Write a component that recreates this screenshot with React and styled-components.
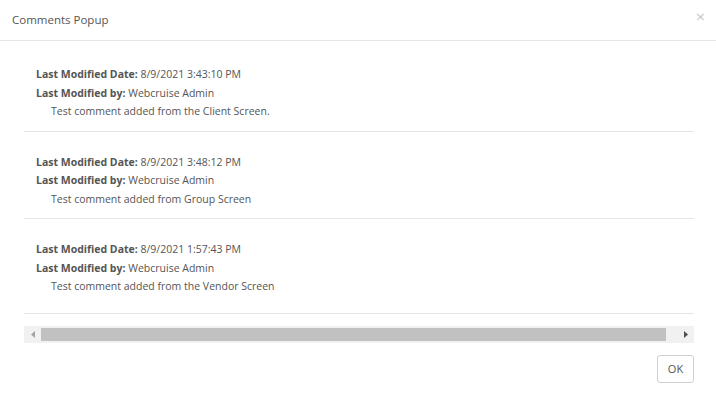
import React from "react";
import styled, { createGlobalStyle } from "styled-components";

const Global = createGlobalStyle`
  html, body { margin: 0; padding: 0; background: #fff; }
  body { font-family: "Open Sans", "Liberation Sans", sans-serif; color: #555; }
  * { box-sizing: border-box; }
`;

const Modal = styled.div`
  width: 716px;
  height: 405px;
  background: #fff;
  display: flex;
  flex-direction: column;
`;

const Header = styled.div`
  height: 41px;
  border-bottom: 1px solid #e5e5e5;
  display: flex;
  align-items: center;
  justify-content: space-between;
  padding: 0 10px 1px 12px;
`;

const Title = styled.h4`
  margin: 0;
  font-size: 11.5px;
  font-weight: 400;
  color: #555;
`;

const Close = styled.button`
  border: 0;
  background: none;
  padding: 0;
  margin-top: -6px;
  font-size: 13px;
  line-height: 1;
  color: #c8c8c8;
  font-family: "DejaVu Sans", sans-serif;
  cursor: pointer;
`;

const Body = styled.div`
  padding: 3px 22px 0 24px;
  display: flex;
  flex-direction: column;
`;

const List = styled.div`
  display: flex;
  flex-direction: column;
`;

const Item = styled.div`
  padding: 21px 12px ${(p) => (p.$last ? "17px" : "10px")};
  border-bottom: 1px solid #e5e5e5;
  font-size: 10.5px;
  line-height: 18.5px;
`;

const Line = styled.div`
  white-space: nowrap;
`;

const Label = styled.strong`
  font-weight: 700;
  color: #555;
`;

const Comment = styled.div`
  padding-left: 15px;
  white-space: nowrap;
`;

const Scrollbar = styled.div`
  margin-top: 12px;
  height: 17px;
  background: #f1f1f1;
  display: flex;
  align-items: center;
`;

const Arrow = styled.div`
  width: 17px;
  height: 17px;
  display: flex;
  align-items: center;
  justify-content: center;
  flex: none;
`;

const Thumb = styled.div`
  height: 13px;
  background: #c1c1c1;
  flex: none;
  width: 625px;
`;

const Spacer = styled.div`
  flex: 1;
`;

const Footer = styled.div`
  display: flex;
  justify-content: flex-end;
  padding: 12px 22px 0 24px;
`;

const OkButton = styled.button`
  width: 37px;
  height: 28px;
  border: 1px solid #d0d0d0;
  border-radius: 3px;
  background: #fff;
  color: #555;
  font-family: "Open Sans", "Liberation Sans", sans-serif;
  font-size: 11px;
  padding: 0;
`;

const comments = [
  { date: "8/9/2021 3:43:10 PM", by: "Webcruise Admin", text: "Test comment added from the Client Screen." },
  { date: "8/9/2021 3:48:12 PM", by: "Webcruise Admin", text: "Test comment added from Group Screen" },
  { date: "8/9/2021 1:57:43 PM", by: "Webcruise Admin", text: "Test comment added from the Vendor Screen" },
];

export default function App() {
  return (
    <>
      <Global />
      <Modal>
        <Header>
          <Title>Comments Popup</Title>
          <Close aria-label="close">×</Close>
        </Header>
        <Body>
          <List>
            {comments.map((c, i) => (
              <Item key={i} $last={i === comments.length - 1}>
                <Line>
                  <Label>Last Modified Date:</Label> {c.date}
                </Line>
                <Line>
                  <Label>Last Modified by:</Label> {c.by}
                </Line>
                <Comment>{c.text}</Comment>
              </Item>
            ))}
          </List>
          <Scrollbar>
            <Arrow>
              <svg width="4" height="7" viewBox="0 0 4 7">
                <path d="M4 0 L0 3.5 L4 7 Z" fill="#a3a3a3" />
              </svg>
            </Arrow>
            <Thumb />
            <Spacer />
            <Arrow>
              <svg width="4" height="7" viewBox="0 0 4 7">
                <path d="M0 0 L4 3.5 L0 7 Z" fill="#505050" />
              </svg>
            </Arrow>
          </Scrollbar>
        </Body>
        <Footer>
          <OkButton>OK</OkButton>
        </Footer>
      </Modal>
    </>
  );
}
